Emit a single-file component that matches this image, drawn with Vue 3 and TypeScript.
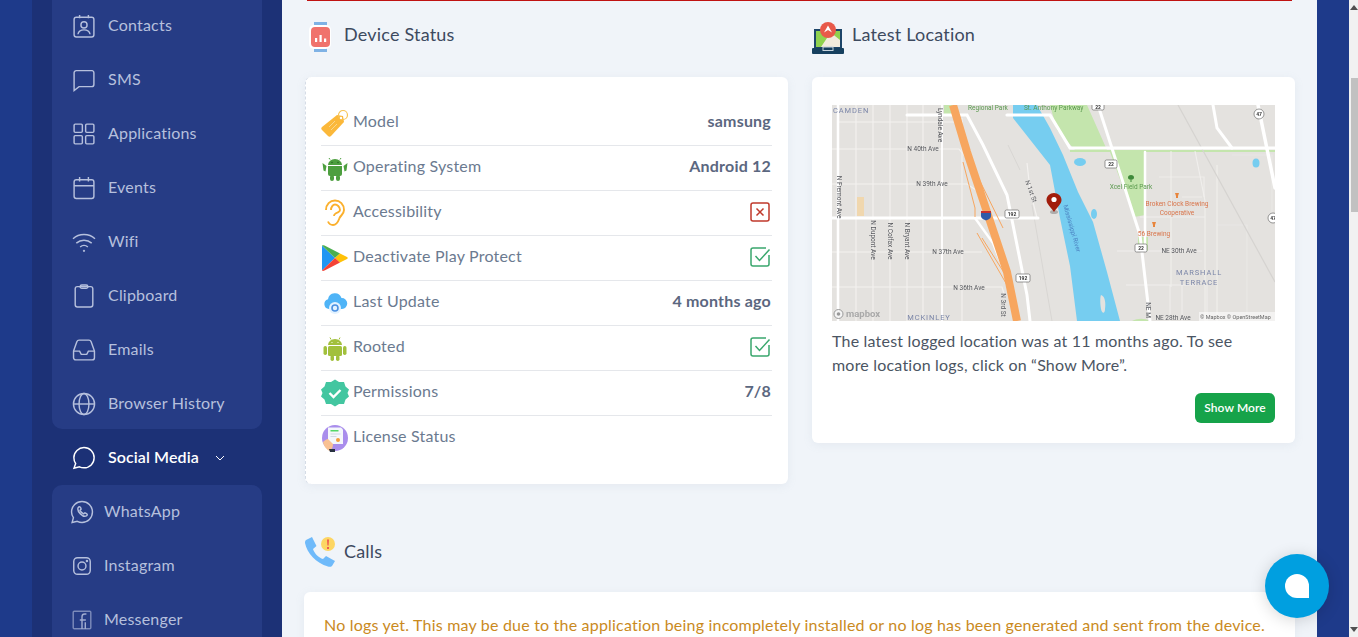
<template>
  <div class="page">
    <aside class="sidebar">
      <nav class="panel panel--top">
        <a v-for="item in mainNav" :key="item.label" class="nav-item">
          <svg class="nav-icon" viewBox="2 2 20 20" v-html="item.icon"></svg>
          <span>{{ item.label }}</span>
        </a>
      </nav>
      <a class="nav-item nav-item--active">
        <svg class="nav-icon" viewBox="2 2 20 20">
          <path d="M12 2.500c5.200 0 9.200 3.900 9.200 9.200s-4 9.200-9.200 9.200c-1.500 0-2.900-.3-4.100-.9l-5 1.300 1.500-4.300c-1-1.400-1.600-3.300-1.600-5.300 0-5.300 4.400-9.200 9.200-9.200z" />
        </svg>
        <span>Social Media</span>
        <svg class="chevron" viewBox="0 0 10 6"><path d="M1 1l4 4 4-4" /></svg>
      </a>
      <nav class="panel panel--sub">
        <a v-for="item in socialNav" :key="item.label" class="nav-item nav-item--sub">
          <svg class="nav-icon" viewBox="2 2 20 20" v-html="item.icon"></svg>
          <span>{{ item.label }}</span>
        </a>
      </nav>
    </aside>

    <main class="content">
      <div class="alert-edge"></div>
      <div class="columns">
        <section>
          <header class="section-title">
            <svg class="title-icon" viewBox="0 0 24 30">
              <rect x="6" y="0" width="13" height="5" fill="#7fb2e5" />
              <rect x="6" y="25" width="13" height="5" fill="#7fb2e5" />
              <rect x="1" y="3" width="22" height="24" rx="5" fill="#fff" />
              <rect x="3" y="5" width="19" height="20" rx="4" fill="#f0726c" />
              <path d="M7 20v-4h2.200v4zM11.500 20v-7h2.200v7zM16 20v-3.500h2.200V20z" fill="#fff" />
            </svg>
            <h2>Device Status</h2>
          </header>
          <div class="card status-card">
            <div v-for="row in statusRows" :key="row.label" class="status-row">
              <svg class="row-icon" viewBox="0 0 28 28" v-html="row.icon"></svg>
              <span class="row-label">{{ row.label }}</span>
              <strong v-if="row.value" class="row-value">{{ row.value }}</strong>
              <svg v-else-if="row.flag === 'no'" class="flag" viewBox="0 0 22 22">
                <rect x="2" y="2" width="18" height="18" rx="2" fill="none" stroke="#c0392b" stroke-width="1.500" />
                <path d="M7.500 7.500l7 7M14.500 7.500l-7 7" stroke="#c0392b" stroke-width="1.500" fill="none" />
              </svg>
              <svg v-else-if="row.flag === 'yes'" class="flag" viewBox="0 0 22 22">
                <path d="M20 9v9a2 2 0 0 1-2 2H4a2 2 0 0 1-2-2V4a2 2 0 0 1 2-2h13" fill="none" stroke="#3aa76d" stroke-width="1.500" />
                <path d="M6.500 10l4 4.500L20.500 3.500" fill="none" stroke="#3aa76d" stroke-width="1.500" />
              </svg>
            </div>
          </div>
        </section>

        <section>
          <header class="section-title section-title--tight">
            <svg class="title-icon title-icon--wide" viewBox="0 0 32 32">
              <rect x="2" y="7" width="28" height="20" fill="#1d4569" />
              <path d="M4 9h24v16H4z" fill="#8fd14f" />
              <path d="M9 25l6-9 3-6 10 8v7z" fill="#f2ebdd" />
              <rect x="0" y="26" width="32" height="6" rx="1" fill="#17405f" />
              <rect x="11" y="25" width="10" height="3.500" fill="none" stroke="#c7d3dc" />
              <circle cx="16" cy="8" r="8" fill="#e8594a" />
              <path d="M16 3.500l4 7-4-2.500-4 2.500z" fill="#fff" />
            </svg>
            <h2>Latest Location</h2>
          </header>
          <div class="card location-card">
            <svg class="map" viewBox="0 0 443 216">
              <rect width="443" height="216" fill="#e4e2df" />
              <g fill="#c4e5ad">
                <path d="M112 0h8l3 9h-11zM218 0h37l20 45h-32l-18-20-7-25z" />
                <path d="M278 47h35v63l-11 2z" />
                <path d="M306 132h10v14h-10z" />
                <path d="M300 216c6-3 12-3 18 0z" />
                <path d="M238 45h205v2H238z" />
              </g>
              <path d="M181 0h24l13 23 13 27 15 37 15 30 14 50 13 49h-43l-7-55-10-48-10-53-37-47z" fill="#76cdf0" />
              <path d="M269 190c4 1 5 8 4 14 0 5-3 5-4 0-1-5-1-12 0-14z" fill="#e4e2df" />
              <g fill="#76cdf0">
                <ellipse cx="248" cy="57" rx="6" ry="4" />
                <ellipse cx="424" cy="58" rx="3.500" ry="4.500" />
                <ellipse cx="262" cy="109" rx="3" ry="5" />
              </g>
              <rect x="25" y="92" width="7" height="19" fill="#f0d7ae" />

              <g stroke="#f3f1ef" stroke-width="1.200" fill="none">
                <path d="M24 0v216M41 0v216M58 0v216M75 0v216M91 0v216M130 13v203" />
                <path d="M6 17h125M0 44h127l10 12M0 79h135l12 8M0 147h150M0 182h170l3 10" />
                <path d="M195 58l3 27 7 28" />
                <path d="M308 112h65v-15M285 146h85M294 180h70M339 46v136M385 60v156M363 46l10 50v120" opacity=".8" />
                <path d="M338 180v36M350 180v36M375 180v36M350 92h20M327 72h45v20" opacity=".7" />
                <path d="M385 120h30v96M400 50h40v60" opacity=".4" />
              </g>
              <path d="M346 0l97 177" stroke="#d5d3d0" stroke-width="1.200" fill="none" />
              <path d="M200 100l20 116M176 40l12 25" stroke="#d8d6d3" stroke-width="1" fill="none" />

              <g stroke="#fff" fill="none" stroke-linecap="round">
                <path d="M6 0v216" stroke-width="2.500" />
                <path d="M110 0v216" stroke-width="1.800" />
                <path d="M0 113h206" stroke-width="3" />
                <path d="M75 10h60l16 30 24 50 20 100 3 26" stroke-width="3" />
                <path d="M175 10h43l20 33h205" stroke-width="3.200" />
                <path d="M266 0l42 130 10 86" stroke-width="3" />
                <path d="M313 47v93" stroke-width="2.500" />
                <path d="M426 0l17 83" stroke-width="3.500" />
                <path d="M381 0l4 23 15 20" stroke-width="3" />
                <path d="M143 113l18 25 16 40" stroke-width="2.500" />
              </g>
              <g fill="none" stroke="#f7a65f" stroke-linecap="butt">
                <path d="M121 0l14 47 20 60 20 60 10 49" stroke-width="8" />
                <path d="M131 57l12 46v9M145 70l26 53M150 133l28 44M145 128l30 52" stroke-width="1" />
              </g>

              <g class="shield">
                <rect x="173" y="105" width="14" height="8" rx="1.500" />
                <rect x="184" y="169" width="14" height="8" rx="1.500" />
                <rect x="273" y="55" width="12" height="8" rx="1.500" />
                <rect x="303" y="139" width="12" height="8" rx="1.500" />
                <rect x="260" y="-3" width="12" height="8" rx="1.500" />
                <circle cx="427" cy="9" r="5" />
                <circle cx="441" cy="113" r="5" />
              </g>
              <path d="M149 106h10v5c0 2.500-2.500 3.500-5 4.500-2.500-1-5-2-5-4.500z" fill="#2f5ba8" />
              <path d="M149 106h10v2h-10z" fill="#c8322e" />

              <g class="map-text">
                <text x="180" y="111" text-anchor="middle" class="shield-text">192</text>
                <text x="191" y="175" text-anchor="middle" class="shield-text">192</text>
                <text x="279" y="61" text-anchor="middle" class="shield-text">22</text>
                <text x="309" y="145" text-anchor="middle" class="shield-text">22</text>
                <text x="266" y="3.500" text-anchor="middle" class="shield-text">22</text>
                <text x="427" y="11" text-anchor="middle" class="shield-text">47</text>
                <text x="441" y="115" text-anchor="middle" class="shield-text">47</text>

                <text x="1" y="7.500" class="place">CAMDEN</text>
                <text x="97" y="214.500" text-anchor="middle" class="place">MCKINLEY</text>
                <text x="367" y="170" text-anchor="middle" class="place">MARSHALL</text>
                <text x="367" y="180" text-anchor="middle" class="place">TERRACE</text>

                <text x="91" y="46" text-anchor="middle">N 40th Ave</text>
                <text x="100" y="81" text-anchor="middle">N 39th Ave</text>
                <text x="116" y="149" text-anchor="middle">N 37th Ave</text>
                <text x="137" y="185" text-anchor="middle">N 36th Ave</text>
                <text x="347" y="148" text-anchor="middle">NE 30th Ave</text>
                <text x="341" y="214.500" text-anchor="middle">NE 28th Ave</text>
                <text transform="translate(5 92) rotate(90)" text-anchor="middle">N Fremont Ave</text>
                <text transform="translate(106 20) rotate(90)" text-anchor="middle">Lyndale Ave</text>
                <text transform="translate(39 135) rotate(90)" text-anchor="middle">N Dupont Ave</text>
                <text transform="translate(56 136) rotate(90)" text-anchor="middle">N Colfax Ave</text>
                <text transform="translate(73 136) rotate(90)" text-anchor="middle">N Bryant Ave</text>
                <text transform="translate(197 87) rotate(70)" text-anchor="middle">N 1st St</text>
                <text transform="translate(169 200) rotate(90)" text-anchor="middle">N 3rd St</text>
                <text transform="translate(314 205) rotate(90)" text-anchor="middle">NE M</text>

                <text x="156" y="5" text-anchor="middle" class="park">Regional Park</text>
                <text x="192" y="5" class="park">St. Anthony Parkway</text>
                <text x="299" y="84" text-anchor="middle" class="park">Xcel Field Park</text>
                <text x="345" y="101" text-anchor="middle" class="poi">Broken Clock Brewing</text>
                <text x="345" y="110" text-anchor="middle" class="poi">Cooperative</text>
                <text x="322" y="131" text-anchor="middle" class="poi">56 Brewing</text>
                <text transform="translate(238 124) rotate(74)" text-anchor="middle" class="water">Mississippi River</text>
              </g>
              <path d="M299 70c-2 0-3 1-3 2.500s1 2 2.500 2V77h1v-2.500c1.500 0 2.500-.5 2.500-2S301 70 299 70z" fill="#3f8a3a" />
              <path d="M343 88h4l-1 3v2h-2v-2zM320 117h4l-1 3v2h-2v-2z" fill="#e8853c" />

              <ellipse cx="222" cy="107" rx="4" ry="2" fill="#8a8a8a" opacity=".6" />
              <path d="M222 88c-4 0-7.500 3-7.500 7 0 4 4.500 7.500 7.500 12 3-4.500 7.500-8 7.500-12 0-4-3.500-7-7.500-7z" fill="#a11d0c" />
              <circle cx="222" cy="94.500" r="2.600" fill="#fff" />

              <circle cx="6.500" cy="209" r="4.500" fill="#f4f4f4" stroke="#999" />
              <circle cx="6.500" cy="209" r="1.800" fill="#999" />
              <text x="14" y="212" class="mapbox">mapbox</text>
              <rect x="367" y="207" width="76" height="9" fill="#fff" opacity=".55" />
              <text x="368" y="214" class="attribution">© Mapbox © OpenStreetMap</text>
            </svg>
            <p class="location-text">
              The latest logged location was at 11 months ago. To see more location logs, click on “Show More”.
            </p>
            <div class="location-actions">
              <button class="btn-more" type="button">Show More</button>
            </div>
          </div>
        </section>
      </div>

      <header class="section-title section-title--calls">
        <svg class="title-icon title-icon--calls" viewBox="0 0 32 32">
          <path d="M2 4l6-3 4.500 9L9 13c1 4 6 9 10 10l3-3 9 5-3 5c-1 1-3 1-4 .5C12 27 3 17 1 7c0-1 0-2 1-3z" fill="#6fbafa" />
          <circle cx="24" cy="8" r="7" fill="#fdd663" />
          <path d="M23 3.500h2l-.4 6h-1.200zM23 11h2v2h-2z" fill="#ef5b50" />
        </svg>
        <h2>Calls</h2>
      </header>
      <div class="card calls-card">
        No logs yet. This may be due to the application being incompletely installed or no log has been generated and sent from the device.
      </div>
    </main>

    <div class="gutter"></div>
    <div class="scrollbar">
      <span class="arrow arrow--up"></span>
      <span class="thumb"></span>
      <span class="arrow arrow--down"></span>
    </div>

    <button class="chat" type="button" aria-label="Chat"><span class="chat-drop"></span></button>
  </div>
</template>

<script setup lang="ts">
interface NavItem {
  label: string
  icon: string
}

interface StatusRow {
  label: string
  icon: string
  value?: string
  flag?: 'yes' | 'no'
}

const mainNav: NavItem[] = [
  {
    label: 'Contacts',
    icon: '<rect x="3" y="4" width="18" height="18" rx="2"/><path d="M8 2v3M16 2v3"/><circle cx="12" cy="11" r="2.800"/><path d="M6.500 19.500c.5-3 3-4 5.500-4s5 1 5.500 4"/>'
  },
  {
    label: 'SMS',
    icon: '<path d="M5 3.500h14.500a2 2 0 0 1 1.500 2V16a2 2 0 0 1-2 2H7.500L3 21.500V5.500a2 2 0 0 1 2-2z"/>'
  },
  {
    label: 'Applications',
    icon: '<rect x="3" y="3" width="7.500" height="7.500" rx="1"/><rect x="13.500" y="3" width="7.500" height="7.500" rx="1"/><rect x="3" y="13.500" width="7.500" height="7.500" rx="1"/><rect x="13.500" y="13.500" width="7.500" height="7.500" rx="1"/>'
  },
  {
    label: 'Events',
    icon: '<rect x="3" y="4.500" width="18" height="17" rx="2"/><path d="M3 10h18M8 2v4M16 2v4"/>'
  },
  {
    label: 'Wifi',
    icon: '<path d="M2 9c5.500-5 14.500-5 20 0M5 13c4-3.500 10-3.500 14 0M8.500 16.500c2-1.700 5-1.700 7 0"/><circle cx="12" cy="20" r=".4"/>'
  },
  {
    label: 'Clipboard',
    icon: '<rect x="4" y="3.500" width="16" height="18.500" rx="2"/><rect x="8.500" y="2" width="7" height="3" rx="1.500"/>'
  },
  {
    label: 'Emails',
    icon: '<path d="M2.500 13l3-8.500c.3-.8 1-1.500 2-1.500h9c1 0 1.700.7 2 1.500l3 8.500v6a2 2 0 0 1-2 2h-15a2 2 0 0 1-2-2z"/><path d="M2.500 13H8l1.500 3h5l1.500-3h5.500"/>'
  },
  {
    label: 'Browser History',
    icon: '<circle cx="12" cy="12" r="9.600"/><ellipse cx="12" cy="12" rx="4.500" ry="9.600"/><path d="M2.400 12h19.200"/>'
  }
]

const socialNav: NavItem[] = [
  {
    label: 'WhatsApp',
    icon: '<path d="M12 2.500c5.200 0 9.500 4 9.500 9.500s-4.300 9.500-9.500 9.500c-1.600 0-3-.4-4.300-1L3 21.500l1.200-4.300c-1-1.500-1.700-3.300-1.700-5.200 0-5.500 4.300-9.500 9.500-9.500z"/><path d="M8.500 8c.8-1.200 1.800-1 2.200 0l.5 1.300-1 1.200c.7 1.500 1.800 2.500 3.300 3.200l1.200-1 1.400.7c.9.500.9 1.400-.1 2.200-3 1.600-9-4.100-7.500-7.600z"/>'
  },
  {
    label: 'Instagram',
    icon: '<rect x="4.500" y="4.500" width="15" height="15" rx="3.500"/><circle cx="12" cy="12" r="3.600"/><circle cx="16.500" cy="7.500" r=".5"/>'
  },
  {
    label: 'Messenger',
    icon: '<rect x="4" y="4" width="16" height="16" rx="1" opacity=".6"/><path d="M12 20v-8h-2M12 12h3.500M12 12V9c0-1.700 1-2.500 2.500-2.500H16M15 20v-6" opacity=".85"/>'
  }
]

const androidShape = (fill: string) =>
  `<g fill="${fill}"><path d="M7 11a7 6 0 0 1 14 0z"/><rect x="7" y="12" width="14" height="10" rx="1.500"/><rect x="2.500" y="12" width="3.500" height="9" rx="1.700"/><rect x="22" y="12" width="3.500" height="9" rx="1.700"/><rect x="9.500" y="21" width="3.500" height="6" rx="1.700"/><rect x="15" y="21" width="3.500" height="6" rx="1.700"/></g><path d="M10 5.500L9 3.500M18 5.500L19 3.500" stroke="${fill}" fill="none"/><circle cx="11" cy="8.500" r=".6" fill="#fff"/><circle cx="17" cy="8.500" r=".6" fill="#fff"/>`

const statusRows: StatusRow[] = [
  {
    label: 'Model',
    value: 'samsung',
    icon: '<path d="M16 6l6 1 1 6L10 27c-1 1-2 1-3 0l-6-6c-1-1-1-2 0-3z" fill="#fbb83a"/><path d="M8 18l6-6M10 21l6-6" stroke="#f9d78e" fill="none"/><circle cx="22" cy="6" r="4.500" fill="none" stroke="#f7c455" stroke-width="1.200"/><circle cx="20" cy="9" r="1.200" fill="#fff"/>'
  },
  {
    label: 'Operating System',
    value: 'Android 12',
    icon: '<g fill="#4d9f3f"><path d="M7 11a7 6 0 0 1 14 0z"/><path d="M7 12h14v8a2 2 0 0 1-2 2H9a2 2 0 0 1-2-2z"/><path d="M1.500 9l4 3-1 5.500-2-1zM26.500 9l-4 3 1 5.500 2-1z"/><rect x="9" y="21" width="4" height="6" rx="2"/><rect x="15" y="21" width="4" height="6" rx="2"/></g><path d="M9 5.500L8 4M19 5.500l1-1.500" stroke="#4d9f3f"/><circle cx="11" cy="8.500" r=".8" fill="#2c6a24"/><circle cx="17" cy="8.500" r=".8" fill="#2c6a24"/>'
  },
  {
    label: 'Accessibility',
    flag: 'no',
    icon: '<path d="M5 11c0-5.500 4-9.500 9-9.500s9 4 9 9.500c0 4-3 5-4.500 8-1 2.500-2 7-6.500 7-2.500 0-4-1-5-3.500M10 11c0-3 2-5.500 4-5.500s5 2 5 5.500c0 2-2 2-3.500 3s-2.500 1-2.500 3" fill="none" stroke="#fbb02d" stroke-width="1.900"/>'
  },
  {
    label: 'Deactivate Play Protect',
    flag: 'yes',
    icon: '<path d="M1 1.500v25L14 14z" fill="#2196f3"/><path d="M1 1.500c.5-.5 1.500-.5 2.500 0L19 9.500 14 14z" fill="#4caf50"/><path d="M19 9.500l7 3.500c1 .6 1 1.400 0 2l-7 3.500L14 14z" fill="#ffc107"/><path d="M1 26.500c.5.5 1.500.5 2.500 0L19 18.500 14 14z" fill="#f44336"/>'
  },
  {
    label: 'Last Update',
    value: '4 months ago',
    icon: '<path d="M8 20a5 5 0 0 1-1-9.800A7 7 0 0 1 20.500 9 5.500 5.500 0 0 1 21 20z" fill="#4fb4f7"/><circle cx="14" cy="19" r="6" fill="#e2f2ff"/><circle cx="14" cy="19" r="3" fill="none" stroke="#4a90e2" stroke-width="1.600"/>'
  },
  {
    label: 'Rooted',
    flag: 'yes',
    icon: androidShape('#a2c03c')
  },
  {
    label: 'Permissions',
    value: '7/8',
    icon: '<path d="M14 .500l4 2.500h5l1.500 4.500 3.500 3-1.500 3.500 1.500 3.500-3.500 3L23 25h-5l-4 2.500-4-2.500H5l-1.500-4.500-3.500-3L1.500 14 0 10.500l3.500-3L5 3h5z" fill="#43c6a0"/><path d="M8.500 14l4 4 7-7" fill="none" stroke="#fff" stroke-width="2.400"/>'
  },
  {
    label: 'License Status',
    icon: '<circle cx="14" cy="14" r="13" fill="#a98dec"/><path d="M7 3.500h13l2 2V20H7z" fill="#f4f7fb"/><rect x="9.500" y="6" width="8" height="1.500" fill="#53d769"/><path d="M9.500 10h10M9.500 12.500h6" stroke="#cfd8e6"/><circle cx="17" cy="16" r="2" fill="#f39c3d"/><path d="M2 18c2-2 4-3 5-3l5 5c0 3-1 5-3 7-3-1-6-4-7-9z" fill="#f9c193"/><path d="M8 25h6v3H9z" fill="#27313f"/>'
  }
]
</script>

<style>
body {
  overflow: hidden;
}
</style>

<style scoped>
.page {
  display: flex;
  height: 100vh;
  overflow: hidden;
  padding-left: 32px;
  background: #1e3a8a;
  font-family: Lato, "Open Sans", sans-serif;
  letter-spacing: 0.2px;
  box-sizing: border-box;
}

/* Sidebar */
.sidebar {
  flex: 0 0 250px;
  padding: 0 20px;
  box-sizing: border-box;
  background: #1c3176;
}

.panel {
  background: #263c85;
}

.panel--top {
  margin-top: -1px;
  height: 430px;
  border-radius: 0 0 10px 10px;
}

.panel--sub {
  margin-top: 2px;
  height: 200px;
  border-radius: 10px 10px 0 0;
}

.nav-item {
  display: flex;
  align-items: center;
  height: 54px;
  padding-left: 21px;
  color: #b6c0dd;
  font-size: 16px;
  box-sizing: border-box;
}

.nav-item span {
  margin-bottom: 3px;
}

.nav-item--active {
  height: 56px;
  padding-top: 2px;
  color: #fff;
  font-weight: 600;
  letter-spacing: 0.1px;
}

.nav-item--sub {
  padding-left: 19px;
}

.nav-item--sub:first-child {
  margin-top: -2px;
}

.nav-icon {
  flex: none;
  width: 22px;
  height: 22px;
  margin-right: 13px;
  fill: none;
  stroke: currentColor;
  stroke-width: 1.300;
  overflow: visible;
}

.nav-item--sub .nav-icon {
  margin-right: 11px;
}

.chevron {
  width: 10px;
  height: 6px;
  margin-left: 16px;
  fill: none;
  stroke: #fff;
  stroke-width: 1;
}

/* Main column */
.content {
  flex: 0 0 1035px;
  padding: 0 22px 0 23px;
  box-sizing: border-box;
  background: #f0f4f9;
}

.alert-edge {
  height: 1px;
  margin: 0 3px 0 2px;
  background: #c01212;
}

.columns {
  display: grid;
  grid-template-columns: 483px 483px;
  gap: 24px;
  align-items: start;
}

.section-title {
  display: flex;
  align-items: center;
  height: 76px;
  padding-bottom: 8px;
  padding-left: 3px;
  box-sizing: border-box;
}

.section-title h2 {
  margin: 0 0 2px 12px;
  color: #3d4a5f;
  font-size: 18px;
  font-weight: 400;
}

.section-title--tight {
  padding-left: 0;
}

.section-title--tight h2 {
  margin-left: 8px;
}

.section-title--calls {
  height: 72px;
  margin-top: 36px;
  margin-left: -1px;
  padding-left: 0;
}

.section-title--calls h2 {
  margin-left: 8px;
}

.title-icon {
  flex: none;
  width: 24px;
  height: 30px;
  margin-top: 4px;
}

.title-icon--wide {
  width: 32px;
  height: 32px;
  margin-top: 6px;
}

.title-icon--calls {
  width: 32px;
  height: 32px;
  margin-top: 0;
}

.card {
  border-radius: 6px;
  background: #fff;
  box-shadow: 0 2px 10px rgba(148, 163, 184, 0.12);
}

.status-card {
  height: 407px;
  padding: 24px 16px 24px 15px;
  box-sizing: border-box;
  border-left: 1px dashed #d5dce6;
}

.status-row {
  display: flex;
  align-items: center;
  height: 45px;
  border-bottom: 1px solid #e5e7eb;
  box-sizing: border-box;
}

.status-row:last-child {
  border-bottom-color: transparent;
}

.row-icon {
  flex: none;
  width: 28px;
  height: 28px;
  margin-right: 4px;
}

.row-label {
  margin-bottom: 5px;
  color: #6b7a90;
  font-size: 16px;
}

.row-value {
  margin-right: 1px;
  margin-bottom: 5px;
  margin-left: auto;
  color: #5b6780;
  font-size: 16px;
  font-weight: 700;
}

.flag {
  width: 22px;
  height: 22px;
  margin-right: 1px;
  margin-bottom: 3px;
  margin-left: auto;
}

.location-card {
  height: 366px;
  padding: 28px 20px 20px;
  box-sizing: border-box;
}

.map {
  display: block;
  width: 443px;
  height: 216px;
  filter: blur(0.35px);
  letter-spacing: 0;
}

.map-text text {
  font-family: Roboto, sans-serif;
  font-size: 6.500px;
  fill: #55575c;
}

.map-text .place {
  font-size: 7.500px;
  letter-spacing: 0.9px;
  fill: #7b86a8;
}

.map-text .park {
  fill: #5b9a4f;
}

.map-text .poi {
  fill: #d9744a;
}

.map-text .water {
  fill: #4a80c0;
}

.map-text .shield-text {
  font-size: 5px;
  font-weight: 700;
  fill: #333;
}

.shield rect,
.shield circle {
  fill: #fff;
  stroke: #555;
  stroke-width: 0.6;
}

.mapbox {
  font-family: Roboto, sans-serif;
  font-size: 9.500px;
  font-weight: 700;
  fill: #a9a9a9;
}

.attribution {
  font-family: Roboto, sans-serif;
  font-size: 5.500px;
  fill: #666;
}

.location-text {
  max-width: 425px;
  margin: 8px 0 0;
  color: #4b5563;
  font-size: 16px;
  line-height: 24px;
}

.location-actions {
  display: flex;
  justify-content: flex-end;
  margin-top: 16px;
}

.btn-more {
  width: 80px;
  height: 30px;
  padding: 0 0 2px;
  border: 0;
  border-radius: 6px;
  background: #16a34a;
  color: #fff;
  font-family: inherit;
  font-size: 12px;
  font-weight: 600;
  letter-spacing: 0.1px;
}

.calls-card {
  height: 120px;
  margin-left: -1px;
  padding: 22px 20px;
  box-sizing: border-box;
  color: #ca8a1e;
  font-size: 16px;
  line-height: 22px;
}

/* Right side */
.gutter {
  flex: 0 0 32px;
}

.scrollbar {
  display: flex;
  flex: 0 0 9px;
  flex-direction: column;
  align-items: flex-end;
  background: #f1f1f1;
}

.thumb {
  width: 7px;
  height: 134px;
  margin-top: 68px;
  background: #c1c1c1;
}

.arrow {
  width: 0;
  height: 0;
  border-right: 4px solid transparent;
  border-left: 4px solid transparent;
}

.arrow--up {
  margin-top: 5px;
  border-bottom: 5px solid #505050;
}

.arrow--down {
  margin-top: auto;
  margin-bottom: 5px;
  border-top: 5px solid #505050;
}

.chat {
  position: fixed;
  right: 29px;
  bottom: 19px;
  display: flex;
  align-items: center;
  justify-content: center;
  width: 64px;
  height: 64px;
  padding: 0;
  border: 0;
  border-radius: 50%;
  background: #009fe0;
  box-shadow: 0 2px 16px rgba(0, 0, 0, 0.16);
}

.chat-drop {
  width: 24px;
  height: 24px;
  border-radius: 50% 50% 0 50%;
  background: #fff;
}
</style>
